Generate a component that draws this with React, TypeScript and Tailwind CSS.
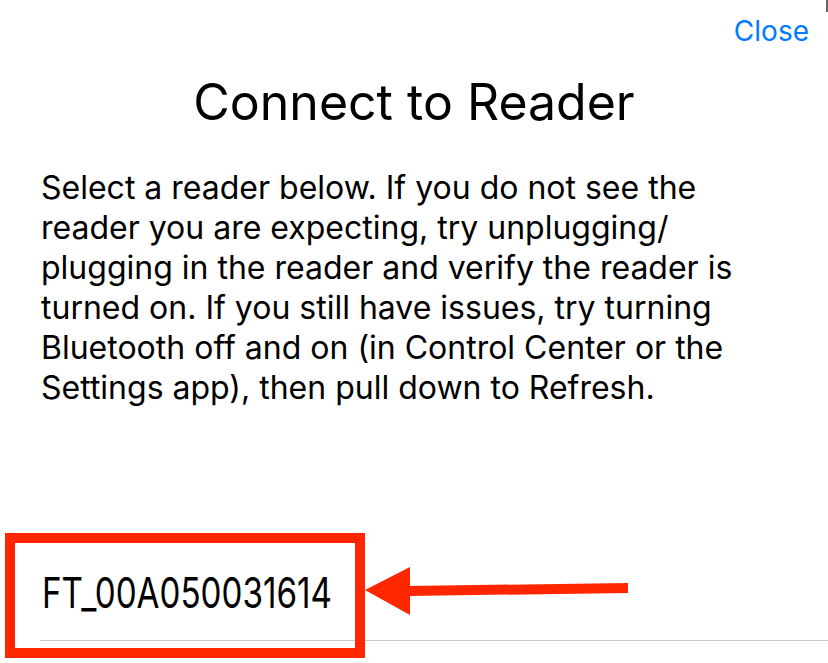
const lines = [
  'Select a reader below. If you do not see the',
  'reader you are expecting, try unplugging/',
  'plugging in the reader and verify the reader is',
  'turned on. If you still have issues, try turning',
  'Bluetooth off and on (in Control Center or the',
  'Settings app), then pull down to Refresh.',
];

export default function App() {
  return (
    <div className="relative w-[828px] h-[663px] bg-white overflow-hidden text-black font-['Inter','Liberation_Sans',sans-serif] flex flex-col">
      {/* Header */}
      <div className="flex justify-end pr-[19px] pt-[17px]">
        <button className="text-[28px] leading-[29px] text-[#007aff]">Close</button>
      </div>
      <h1 className="mt-[26px] text-center text-[50px] leading-[60px] font-normal">Connect to Reader</h1>

      {/* Description */}
      <p className="mt-[36px] pl-[41px] text-[32px] leading-[40px]">
        {lines.map(l => (
          <span key={l} className="block whitespace-nowrap">{l}</span>
        ))}
      </p>

      {/* Reader list */}
      <div className="mt-auto">
        <div className="pl-[42px] h-[50px] flex items-center">
          <span className="inline-block origin-left scale-x-[0.79] text-[42px] leading-[50px] whitespace-nowrap">FT_00A050031614</span>
        </div>
        <div className="mt-[22px] ml-[40px] h-px bg-[#c8c7cc]" />
        <div className="h-[22px]" />
      </div>

      {/* annotation */}
      <div className="absolute left-[5px] top-[533px] w-[360px] h-[125px] border-[10px] border-[#ff2600]" />
      <svg className="absolute left-[360px] top-[555px]" width="280" height="70" viewBox="0 0 280 70">
        <polygon points="5,35 50,12 50,60" fill="#ff2600" />
        <polygon points="48,31 268,28 268,38 48,41" fill="#ff2600" />
      </svg>
      <div className="absolute right-0 top-0 w-[2px] h-[12px] bg-[#666]" />
    </div>
  );
}
